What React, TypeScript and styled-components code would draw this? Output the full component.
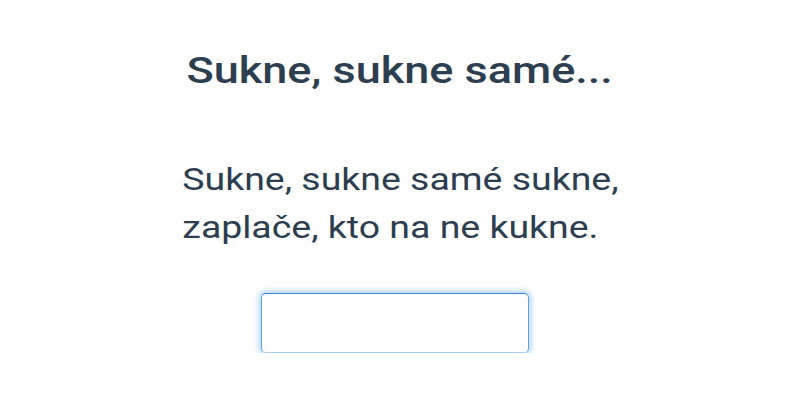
import * as React from 'react';
import styled, { createGlobalStyle } from 'styled-components';

const GlobalStyle = createGlobalStyle`
  html, body {
    margin: 0;
    padding: 0;
    background: #ffffff;
  }
  body {
    font-family: Roboto, 'Liberation Sans', sans-serif;
    color: #2c3e50;
  }
`;

const Page = styled.main`
  display: flex;
  flex-direction: column;
  align-items: center;
  padding-top: 48px;
`;

// the text in the shot is drawn a touch wide
const Title = styled.h1`
  margin: 0;
  font-size: 37.5px;
  font-weight: 500;
  line-height: 44px;
  transform: scaleX(1.2);
`;

const Verse = styled.p`
  margin: 63px 0 0;
  font-size: 32px;
  font-weight: 400;
  line-height: 48px;
  text-align: left;
  transform: scaleX(1.17);
`;

const Answer = styled.input`
  margin: 42px 10px 0 0;
  width: 268px;
  height: 60px;
  box-sizing: border-box;
  border: 1px solid #5aa2e0;
  border-top-color: #3584d4;
  border-bottom-color: #a9d0f0;
  border-radius: 5px;
  outline: none;
  background: #fff;
  box-shadow: 0 0 5px 3px rgba(110, 175, 235, 0.42);
  font: inherit;
  font-size: 24px;
  padding: 0 12px;
  color: inherit;
`;

export default function App() {
  return (
    <>
      <GlobalStyle />
      <Page>
        <Title>Sukne, sukne samé...</Title>
        <Verse>
          Sukne, sukne samé sukne,
          <br />
          zaplače, kto na ne kukne.
        </Verse>
        <Answer type="text" aria-label="odpoveď" />
      </Page>
    </>
  );
}
